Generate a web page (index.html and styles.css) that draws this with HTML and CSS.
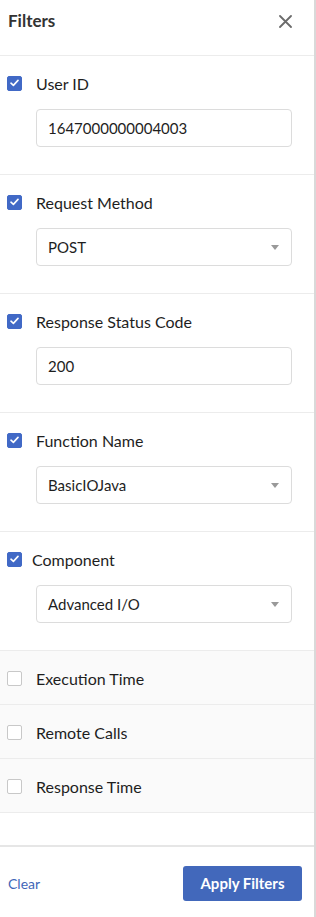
FILE: index.html
```html
<!DOCTYPE html>
<html lang="en">
<head>
    <meta charset="UTF-8">
    <meta name="viewport" content="width=device-width, initial-scale=1.0">
    <title>Filters</title>
    <link rel="stylesheet" href="styles.css">
</head>
<body>
<div class="panel">
    <div class="panel-head">
        <p class="title">Filters</p>
        <button class="close" aria-label="Close">
            <svg width="13" height="13" viewBox="0 0 13 13"><path d="M1 1L12 12M12 1L1 12" stroke="#6b6b6b" stroke-width="1.8" stroke-linecap="round"/></svg>
        </button>
    </div>

    <div class="filters">
        <div class="filter open">
            <label class="check-row">
                <span class="box checked"><svg width="9" height="8" viewBox="0 0 9 8"><path d="M1 4.2L3.4 6.4L8 1.4" fill="none" stroke="#fff" stroke-width="1.6" stroke-linecap="round" stroke-linejoin="round"/></svg></span>
                <span class="names">User ID</span>
            </label>
            <div class="field">1647000000004003</div>
        </div>

        <div class="filter open">
            <label class="check-row">
                <span class="box checked"><svg width="9" height="8" viewBox="0 0 9 8"><path d="M1 4.2L3.4 6.4L8 1.4" fill="none" stroke="#fff" stroke-width="1.6" stroke-linecap="round" stroke-linejoin="round"/></svg></span>
                <span class="names">Request Method</span>
            </label>
            <div class="field select">POST<span class="caret"></span></div>
        </div>

        <div class="filter open">
            <label class="check-row">
                <span class="box checked"><svg width="9" height="8" viewBox="0 0 9 8"><path d="M1 4.2L3.4 6.4L8 1.4" fill="none" stroke="#fff" stroke-width="1.6" stroke-linecap="round" stroke-linejoin="round"/></svg></span>
                <span class="names">Response Status Code</span>
            </label>
            <div class="field">200</div>
        </div>

        <div class="filter open">
            <label class="check-row">
                <span class="box checked"><svg width="9" height="8" viewBox="0 0 9 8"><path d="M1 4.2L3.4 6.4L8 1.4" fill="none" stroke="#fff" stroke-width="1.6" stroke-linecap="round" stroke-linejoin="round"/></svg></span>
                <span class="names">Function Name</span>
            </label>
            <div class="field select">BasicIOJava<span class="caret"></span></div>
        </div>

        <div class="filter open">
            <label class="check-row">
                <span class="box checked"><svg width="9" height="8" viewBox="0 0 9 8"><path d="M1 4.2L3.4 6.4L8 1.4" fill="none" stroke="#fff" stroke-width="1.6" stroke-linecap="round" stroke-linejoin="round"/></svg></span>
                <span class="names comp">Component</span>
            </label>
            <div class="field select">Advanced I/O<span class="caret"></span></div>
        </div>

        <div class="filter closed">
            <label class="check-row">
                <span class="box"></span>
                <span class="names">Execution Time</span>
            </label>
        </div>

        <div class="filter closed">
            <label class="check-row">
                <span class="box"></span>
                <span class="names">Remote Calls</span>
            </label>
        </div>

        <div class="filter closed">
            <label class="check-row">
                <span class="box"></span>
                <span class="names">Response Time</span>
            </label>
        </div>
    </div>

    <div class="panel-foot">
        <a href="#" class="clear">Clear</a>
        <button class="apply">Apply Filters</button>
    </div>
</div>
</body>
</html>
```

FILE: styles.css
```css
/* Reset */
* {
  box-sizing: border-box;
  margin: 0;
  padding: 0;
}

body {
  font-family: Lato, 'Open Sans', Arial, sans-serif;
  background: #fff;
  color: #222;
}

/* Panel */
.panel {
  width: 316px;
  height: 917px;
  border-right: 2px solid #d9d9d9;
  display: flex;
  flex-direction: column;
}

.panel-head {
  height: 56px;
  border-bottom: 1px solid #ececec;
  display: flex;
  align-items: flex-start;
  justify-content: space-between;
  padding: 8px 22px 0 8px;
}

.panel-head .title {
  font-size: 17px;
  font-weight: bold;
  color: #333;
  line-height: 26px;
}

.close {
  border: none;
  background: none;
  margin-top: 7px;
  display: flex;
}

/* Filter list */
.filters {
  flex: 1;
}

.filter {
  border-bottom: 1px solid #ececec;
}

.filter.open {
  height: 119px;
  padding: 16px 0 0 7px;
}

.filter.closed {
  height: 54px;
  padding: 16px 0 0 7px;
  background: #fafafa;
}

.check-row {
  display: flex;
  align-items: center;
  height: 22px;
}

.box {
  width: 15px;
  height: 15px;
  border: 1px solid #c8c8c8;
  border-radius: 2px;
  background: #fff;
  display: flex;
  align-items: center;
  justify-content: center;
}

.box.checked {
  background: #4169c6;
  border-color: #4169c6;
}

.names {
  margin-left: 14px;
  font-size: 16px;
  color: #1e1e1e;
}

.names.comp {
  margin-left: 10px;
}

.field {
  margin: 15px 0 0 29px;
  width: 256px;
  height: 38px;
  border: 1px solid #dcdcdc;
  border-radius: 4px;
  background: #fff;
  padding: 0 11px;
  font-size: 15px;
  line-height: 36px;
  color: #1e1e1e;
  position: relative;
}

.field.select .caret {
  position: absolute;
  right: 12px;
  top: 16px;
  border-left: 4px solid transparent;
  border-right: 4px solid transparent;
  border-top: 5px solid #999;
}

/* Footer */
.panel-foot {
  height: 72px;
  border-top: 2px solid #e6e6e6;
  display: flex;
  align-items: center;
  justify-content: space-between;
  padding: 2px 12px 0 8px;
}

.clear {
  color: #3f66b8;
  text-decoration: none;
  font-size: 14px;
}

.apply {
  width: 119px;
  height: 35px;
  border: none;
  border-radius: 3px;
  background: #4268bb;
  color: #fff;
  font-family: Lato, 'Open Sans', Arial, sans-serif;
  font-size: 15px;
  font-weight: bold;
}
```
